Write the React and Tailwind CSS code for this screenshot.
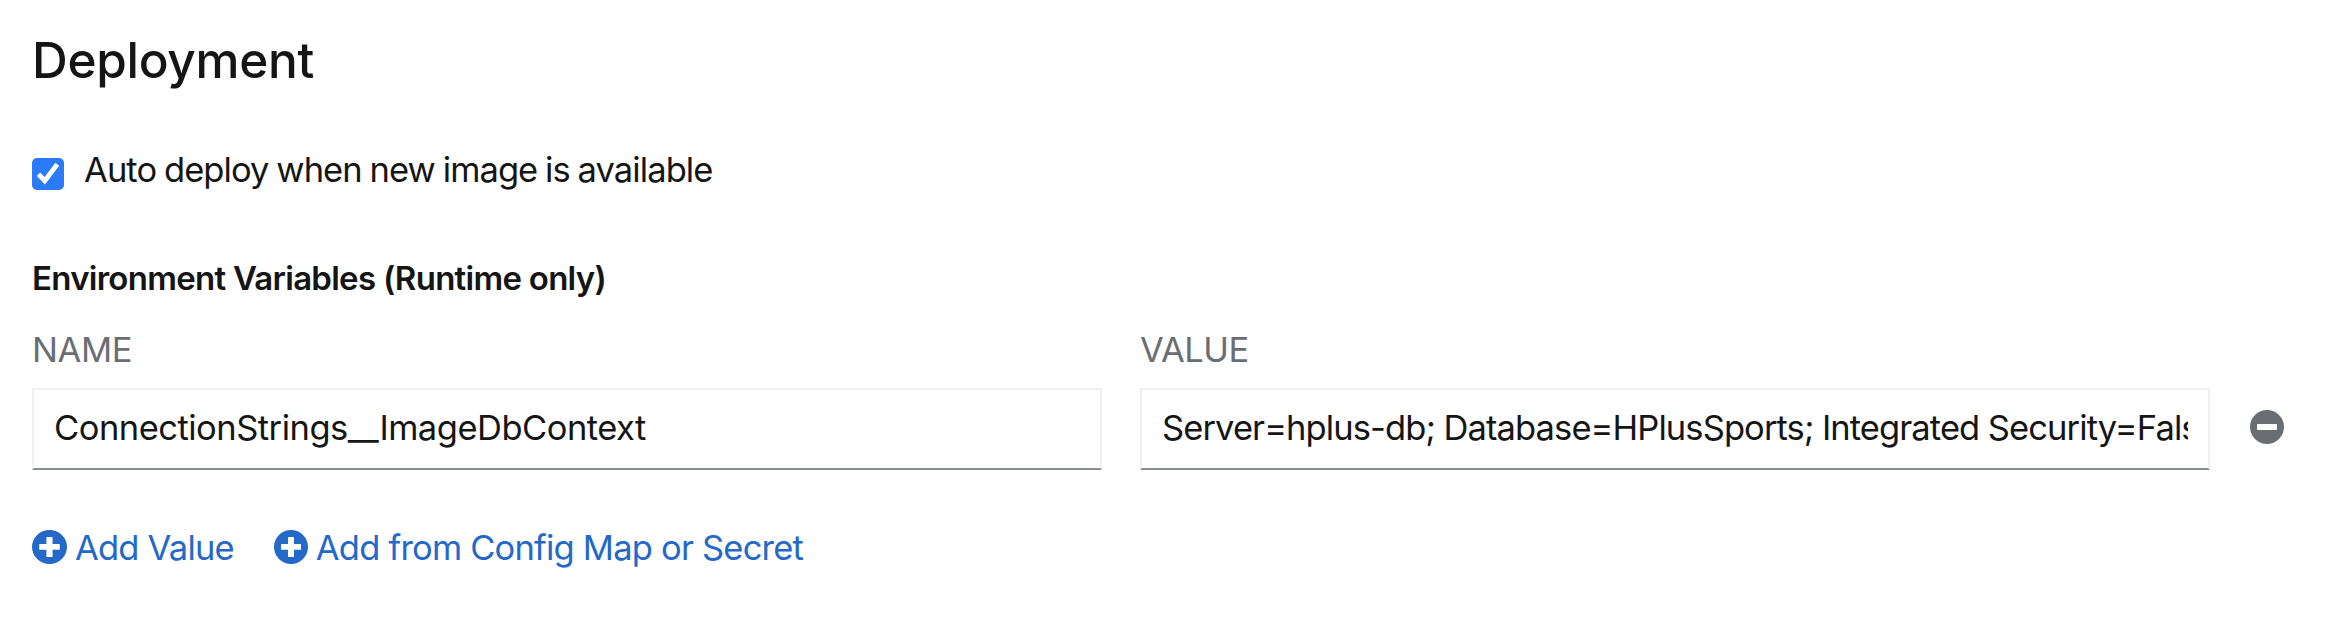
import { useState } from "react";

function PlusCircle({ className }) {
  return (
    <svg viewBox="0 0 34 34" preserveAspectRatio="none" className={className} aria-hidden="true">
      <path
        fill="currentColor"
        fillRule="evenodd"
        d="M17 0a17 17 0 1 0 0 34a17 17 0 1 0 0-34Zm-2.2 7h4.600q.6 0 .6.6V14h6.400q.6 0 .6.6v4.600q0 .6-.6.6H20v6.600q0 .6-.6.6h-4.800q-.6 0-.6-.6v-6.600H7.600q-.6 0-.6-.6v-4.600q0-.6.6-.6H14V7.600q0-.6.8-.6Z"
      />
    </svg>
  );
}

function MinusCircle({ className }) {
  return (
    <svg viewBox="0 0 34 34" className={className} aria-hidden="true">
      <path
        fill="currentColor"
        fillRule="evenodd"
        d="M17 0a17 17 0 1 0 0 34a17 17 0 1 0 0-34ZM7.600 14h18.800q.6 0 .6.6v4.800q0 .6-.6.6H7.600q-.6 0-.6-.6v-4.800q0-.6.6-.6Z"
      />
    </svg>
  );
}

function Field({ label, value, labelClass, inputClass }) {
  const [text, setText] = useState(value);
  return (
    <label className="flex w-[1070px] flex-col">
      <span className={`h-[50px] text-[34.5px] leading-[50px] text-[#6a6e73] ${labelClass}`}>{label}</span>
      <input
        value={text}
        onChange={(e) => setText(e.target.value)}
        className={`mt-[13px] h-[82px] w-full border-2 border-[#f0f0f0] border-b-[#8a8d90] bg-white px-5 pb-[3px] text-[34.5px] outline-none ${inputClass}`}
      />
    </label>
  );
}

export default function App() {
  const [auto, setAuto] = useState(true);
  return (
    <main className="flex h-[618px] w-[2330px] flex-col overflow-hidden bg-white px-8 pt-[30px] font-['Inter',sans-serif] text-[#151515]">
      <h1 className="flex h-[60px] items-center whitespace-nowrap text-[49.5px] font-medium leading-[60px] tracking-[-0.3px]">
        Deployment
      </h1>
      <label className="mt-[55px] flex h-[50px] items-center">
        <input type="checkbox" checked={auto} onChange={() => setAuto(!auto)} className="peer sr-only" />
        <span className="mt-[7px] flex size-8 items-center justify-center rounded-[5px] bg-[#2b7af8]">
          {auto && (
            <svg viewBox="0 0 32 32" className="size-8" fill="none" stroke="white" strokeWidth="4.800" aria-hidden="true">
              <path d="M6.400 16.300 12.800 22.800 25.300 6.300" />
            </svg>
          )}
        </span>
        <span className="ml-5 whitespace-nowrap text-[34.5px] leading-[50px] tracking-[-0.92px] [word-spacing:-1px]">
          Auto deploy when new image is available
        </span>
      </label>
      <h2 className="mt-[58px] h-[50px] whitespace-nowrap text-[33px] font-semibold leading-[50px] tracking-[-0.73px]">
        Environment Variables (Runtime only)
      </h2>
      <div className="mt-[22px] flex items-end gap-[38px]">
        <Field
          label="NAME"
          value="ConnectionStrings__ImageDbContext"
          labelClass="tracking-[-0.4px]"
          inputClass="tracking-[-0.5px]"
        />
        <Field
          label="VALUE"
          value="Server=hplus-db; Database=HPlusSports; Integrated Security=False"
          labelClass="tracking-[-0.5px]"
          inputClass="tracking-[-0.9px] [word-spacing:-0.3px]"
        />
        <button aria-label="Remove" className="mb-[26px] ml-[2px] text-[#6a6e73]">
          <MinusCircle className="size-[34px]" />
        </button>
      </div>
      <div className="mt-[53px] flex h-[50px] items-center text-[34.5px] leading-[50px] tracking-[-0.8px] text-[#2468c8]">
        <button className="flex items-center gap-2 whitespace-nowrap">
          <PlusCircle className="-mt-[2px] h-[34px] w-[35px]" />
          <span>Add Value</span>
        </button>
        <button className="ml-10 flex items-center gap-2 whitespace-nowrap">
          <PlusCircle className="-mt-[2px] size-[34px]" />
          <span>Add from Config Map or Secret</span>
        </button>
      </div>
    </main>
  );
}
